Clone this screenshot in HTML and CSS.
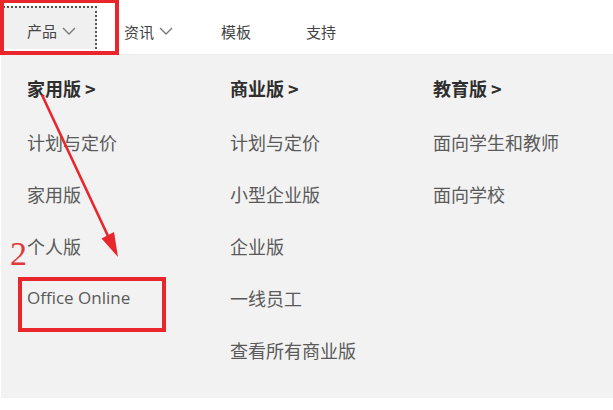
FILE: index.html
```html
<!DOCTYPE html>
<html lang="zh-CN">
<head>
    <meta charset="UTF-8" />
    <title>产品菜单</title>
    <link rel="stylesheet" href="styles.css">
</head>
<body>
    <div class="page">
        <nav class="topnav">
            <div class="nav-cell">
                <a class="nav-link active">产品
                    <svg class="chev" width="14" height="8" viewBox="0 0 14 8"><polyline points="1,1 7,7 13,1" /></svg>
                </a>
            </div>
            <div class="nav-cell">
                <a class="nav-link">资讯
                    <svg class="chev" width="14" height="8" viewBox="0 0 14 8"><polyline points="1,1 7,7 13,1" /></svg>
                </a>
            </div>
            <div class="nav-cell"><a class="nav-link">模板</a></div>
            <div class="nav-cell"><a class="nav-link">支持</a></div>
        </nav>

        <div class="menu">
            <ul class="menu-col">
                <li class="menu-head">家用版 &gt;</li>
                <li>计划与定价</li>
                <li>家用版</li>
                <li>个人版</li>
                <li class="latin">Office Online</li>
            </ul>
            <ul class="menu-col">
                <li class="menu-head">商业版 &gt;</li>
                <li>计划与定价</li>
                <li>小型企业版</li>
                <li>企业版</li>
                <li>一线员工</li>
                <li>查看所有商业版</li>
            </ul>
            <ul class="menu-col">
                <li class="menu-head">教育版 &gt;</li>
                <li>面向学生和教师</li>
                <li>面向学校</li>
            </ul>
        </div>

        <!-- red annotations drawn over the screenshot -->
        <div class="mark mark-nav"></div>
        <div class="mark mark-item"></div>
        <span class="step">2</span>
        <svg class="arrow" width="613" height="410" viewBox="0 0 613 410">
            <line x1="42" y1="95" x2="108" y2="236" />
            <polygon points="118,257 114,232 101.5,238.5" />
        </svg>
    </div>
</body>
</html>
```

FILE: styles.css
```css
html {
    box-sizing: border-box;
}

*, *:before, *:after {
    box-sizing: inherit;
}

body {
    margin: 0;
    background: #fff;
    font-family: "Noto Sans CJK SC", "Noto Sans", sans-serif;
    color: #555;
}

.page {
    position: relative;
    width: 613px;
    height: 410px;
    overflow: hidden;
}

.topnav {
    display: grid;
    grid-template-columns: 124px 97px 85px auto;
    height: 55px;
    background: #fff;
    border-bottom: 1px solid #ececec;
}

.nav-cell {
    display: flex;
}

.nav-link {
    display: flex;
    align-items: center;
    gap: 5px;
    padding-top: 8px;
    font-size: 15px;
    color: #444;
}

.nav-link.active {
    margin: 6px 0 5px 3px;
    width: 94px;
    padding-left: 24px;
    padding-top: 4px;
    background: #f0f0f0;
    border-top: 2px dotted #555;
    border-right: 2px dotted #555;
}

.chev {
    fill: none;
    stroke: #777;
    stroke-width: 1.3;
}

.menu {
    display: grid;
    grid-template-columns: 203px 203px 1fr;
    height: 343px;
    margin-left: 1px;
    padding: 6px 0 0 26px;
    background: #f2f2f2;
}

.menu-col {
    list-style: none;
    margin: 0;
    padding: 0;
}

.menu-col li {
    height: 52px;
    line-height: 52px;
    font-size: 18px;
    color: #5a5a5a;
}

.menu-col li.menu-head {
    height: 55px;
    line-height: 55px;
    font-weight: bold;
    color: #2e2e2e;
}

.menu-col li.latin {
    font-family: "Open Sans", "Noto Sans", sans-serif;
    font-size: 17px;
}

.mark {
    position: absolute;
    border: 4px solid #e8262c;
}

.mark-nav {
    left: 0;
    top: -1px;
    width: 119px;
    height: 56px;
}

.mark-item {
    left: 18px;
    top: 277px;
    width: 148px;
    height: 55px;
}

.step {
    position: absolute;
    left: 10px;
    top: 234px;
    font-family: "Liberation Serif", "DejaVu Serif", serif;
    font-size: 34px;
    line-height: 40px;
    color: #e0393c;
}

.arrow {
    position: absolute;
    left: 0;
    top: 0;
}

.arrow line {
    stroke: #e8262c;
    stroke-width: 2.6;
}

.arrow polygon {
    fill: #e8262c;
}
```
